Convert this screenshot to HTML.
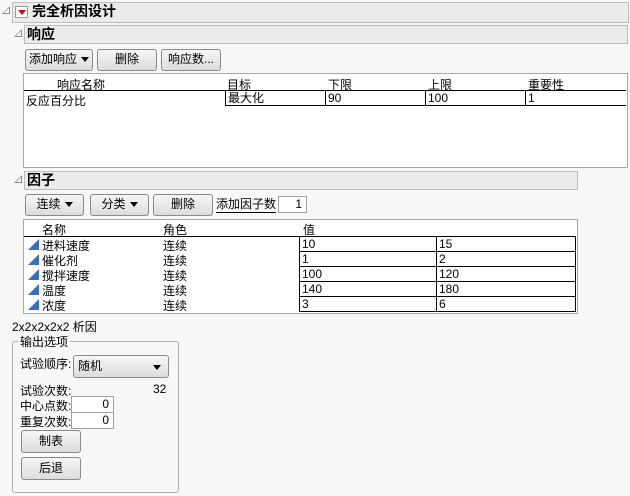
<!DOCTYPE html>
<html><head><meta charset="utf-8"><style>
*{box-sizing:border-box;margin:0;padding:0}
body{width:630px;height:496px;background:#f7f7f7;position:relative;overflow:hidden;font-family:"Liberation Sans","Noto Sans CJK SC",sans-serif;font-size:12px;color:#000}
.a{position:absolute;white-space:nowrap}
.bar{position:absolute;background:#ebebeb;border:1px solid #bdbdbd;font-weight:bold;font-size:14px;line-height:17px}
.tri{position:absolute;width:0;height:0;border-left:8px solid transparent;border-bottom:8px solid #888}
.tri:after{content:"";position:absolute;left:-6px;top:2px;border-left:5px solid transparent;border-bottom:5px solid #fff}
.btn{position:absolute;border:1px solid #8a8a8a;border-radius:3px;background:linear-gradient(#f6f6f6,#dcdcdc);text-align:center;line-height:19px;font-size:12px}
.dn{display:inline-block;width:0;height:0;border-left:4px solid transparent;border-right:4px solid transparent;border-top:5px solid #000;vertical-align:middle;margin-left:4px}
.box{position:absolute;background:#fff;border:1px solid #a8a8a8}
.cell{position:absolute;border:1px solid #000;border-top:none;line-height:14px;padding-left:2px;background:#fff}
.inp{position:absolute;background:#fff;border:1px solid #a0a0a0;text-align:right;padding-right:4px;line-height:14px}
.ic{position:absolute;width:0;height:0;border-left:11px solid transparent;border-bottom:11px solid #3a6cc0}
</style></head><body>
<div class="tri" style="left:2px;top:6px"></div>
<div class="bar" style="left:12px;top:2px;width:617px;height:21px;padding-left:19px">完全析因设计</div>
<div class="a" style="left:15px;top:6px;width:13px;height:12px;border:1px solid #999;background:#fff"><div style="position:absolute;left:2px;top:3px;border-left:4px solid transparent;border-right:4px solid transparent;border-top:5px solid #d00"></div></div>
<div class="tri" style="left:14px;top:29px"></div>
<div class="bar" style="left:24px;top:25px;width:604px;height:19px;padding-left:2px">响应</div>
<div class="btn" style="left:25px;top:49px;width:68px;height:22px">添加响应<span class="dn"></span></div>
<div class="btn" style="left:97px;top:49px;width:60px;height:22px">删除</div>
<div class="btn" style="left:161px;top:49px;width:60px;height:22px">响应数...</div>
<div class="box" style="left:23px;top:73px;width:605px;height:95px"></div>
<div class="a" style="left:57px;top:76px">响应名称</div>
<div class="a" style="left:227px;top:76px">目标</div>
<div class="a" style="left:328px;top:76px">下限</div>
<div class="a" style="left:428px;top:76px">上限</div>
<div class="a" style="left:528px;top:76px">重要性</div>
<div class="a" style="left:24px;top:90px;width:602px;height:1px;background:#000"></div>
<div class="a" style="left:26px;top:92px">反应百分比</div>
<div class="cell" style="left:225px;top:91px;width:101px;height:15px">最大化</div>
<div class="cell" style="left:325px;top:91px;width:101px;height:15px">90</div>
<div class="cell" style="left:425px;top:91px;width:101px;height:15px">100</div>
<div class="cell" style="left:525px;top:91px;width:101px;height:15px;border-right:none">1</div>
<div class="tri" style="left:14px;top:175px"></div>
<div class="bar" style="left:24px;top:171px;width:554px;height:19px;padding-left:2px">因子</div>
<div class="btn" style="left:25px;top:194px;width:59px;height:22px">连续<span class="dn"></span></div>
<div class="btn" style="left:90px;top:194px;width:59px;height:22px">分类<span class="dn"></span></div>
<div class="btn" style="left:153px;top:194px;width:60px;height:22px">删除</div>
<div class="a" style="left:216px;top:197px;border-bottom:1px solid #000;line-height:15px">添加因子数</div>
<div class="inp" style="left:278px;top:196px;width:29px;height:17px;line-height:15px">1</div>
<div class="box" style="left:23px;top:219px;width:555px;height:95px"></div>
<div class="a" style="left:42px;top:221px">名称</div>
<div class="a" style="left:163px;top:221px">角色</div>
<div class="a" style="left:303px;top:221px">值</div>
<div class="a" style="left:24px;top:236px;width:552px;height:1px;background:#000"></div>
<div class="ic" style="left:28px;top:239px"></div><div class="a" style="left:42px;top:237px">进料速度</div><div class="a" style="left:163px;top:237px">连续</div>
<div class="ic" style="left:28px;top:254px"></div><div class="a" style="left:42px;top:252px">催化剂</div><div class="a" style="left:163px;top:252px">连续</div>
<div class="ic" style="left:28px;top:269px"></div><div class="a" style="left:42px;top:267px">搅拌速度</div><div class="a" style="left:163px;top:267px">连续</div>
<div class="ic" style="left:28px;top:284px"></div><div class="a" style="left:42px;top:282px">温度</div><div class="a" style="left:163px;top:282px">连续</div>
<div class="ic" style="left:28px;top:299px"></div><div class="a" style="left:42px;top:297px">浓度</div><div class="a" style="left:163px;top:297px">连续</div>
<div class="cell" style="left:299px;top:237px;width:138px;height:15px">10</div><div class="cell" style="left:436px;top:237px;width:140px;height:15px">15</div>
<div class="cell" style="left:299px;top:252px;width:138px;height:15px">1</div><div class="cell" style="left:436px;top:252px;width:140px;height:15px">2</div>
<div class="cell" style="left:299px;top:267px;width:138px;height:15px">100</div><div class="cell" style="left:436px;top:267px;width:140px;height:15px">120</div>
<div class="cell" style="left:299px;top:282px;width:138px;height:15px">140</div><div class="cell" style="left:436px;top:282px;width:140px;height:15px">180</div>
<div class="cell" style="left:299px;top:297px;width:138px;height:15px">3</div><div class="cell" style="left:436px;top:297px;width:140px;height:15px">6</div>
<div class="a" style="left:12px;top:318px">2x2x2x2x2 析因</div>
<div class="a" style="left:12px;top:341px;width:167px;height:152px;border:1px solid #b0b0b0;border-radius:3px"></div>
<div class="a" style="left:18px;top:333px;background:#f7f7f7;padding:0 2px">输出选项</div>
<div class="a" style="left:20px;top:355px">试验顺序:</div>
<div class="btn" style="left:73px;top:355px;width:96px;height:23px;text-align:left;padding-left:4px;line-height:21px">随机<span style="position:absolute;right:7px;top:9px;border-left:4px solid transparent;border-right:4px solid transparent;border-top:5px solid #000"></span></div>
<div class="a" style="left:20px;top:382px">试验次数:</div>
<div class="a" style="left:153px;top:382px">32</div>
<div class="a" style="left:20px;top:397px">中心点数:</div>
<div class="inp" style="left:71px;top:396px;width:43px;height:17px">0</div>
<div class="a" style="left:20px;top:413px">重复次数:</div>
<div class="inp" style="left:71px;top:412px;width:43px;height:17px">0</div>
<div class="btn" style="left:21px;top:430px;width:60px;height:23px;line-height:21px">制表</div>
<div class="btn" style="left:21px;top:457px;width:60px;height:23px;line-height:21px">后退</div>
</body></html>
